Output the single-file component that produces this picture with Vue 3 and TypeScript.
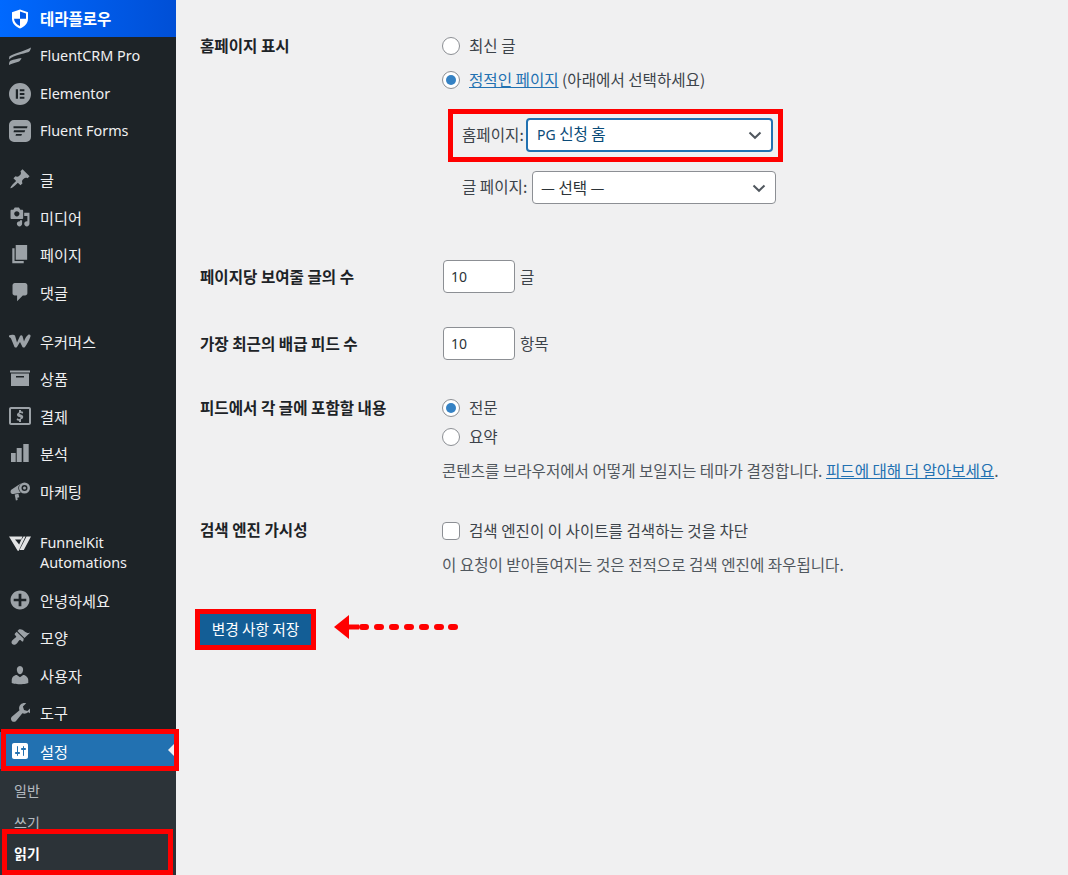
<script setup lang="ts">
interface Item { label: string; icon: string; gap?: boolean; lat?: boolean; two?: boolean; big?: boolean; vb?: string; tone?: string; tight?: boolean }

const items: Item[] = [
  { label: 'FluentCRM Pro', lat: true, big: true, vb: '0 0 22 22', icon: 'M.3 11.500C4 9 14 6.500 22 2.500c-.4 2.600-1.500 4.300-3 4.800-5 1.700-13 2.300-19 7.200zM0 20c0-2.700.5-3.700 2-4.400 2.500-1 6.500-1.700 10.500-2.500-.5 1.800-1.600 3.200-3.100 3.700C6 17.900 3 18.600 0 20z' },
  { label: 'Elementor', lat: true, big: true, vb: '0 0 22 22', icon: 'M11 0a11 11 0 1 0 0 22 11 11 0 0 0 0-22zM6.800 6.300h2.200v9.400H6.800zM10.800 6.300h4.600v2h-4.600zM10.800 10h4.600v2h-4.600zM10.800 13.700h4.600v2h-4.600z' },
  { label: 'Fluent Forms', lat: true, big: true, vb: '0 0 22 22', icon: 'M5 0h12a5 5 0 0 1 5 5v12a5 5 0 0 1-5 5H5a5 5 0 0 1-5-5V5a5 5 0 0 1 5-5zM4.500 6.200v2h13.500l.5-2zM5 10.200l-.5 2h11l.7-2zM7 14l-.5 1.800h5.800l.7-1.800z' },
  { label: '글', gap: true, tight: true, vb: '1 1 18 18', icon: 'M10.440 3.020l1.820-1.820 6.360 6.350-1.830 1.820c-1.050-.68-2.480-.57-3.410.36l-.75.750c-.92.930-1.040 2.350-.35 3.410l-1.830 1.820-2.410-2.410-2.800 2.790c-.42.420-3.380 2.710-3.800 2.290s1.860-3.390 2.280-3.810l2.790-2.790L4.100 9.360l1.830-1.820c1.050.690 2.480.570 3.400-.36l.75-.75c.930-.92 1.050-2.350.36-3.410z' },
  { label: '미디어', vb: '.5 .5 19 19', icon: 'M13 11V4c0-.55-.45-1-1-1h-1.670L9 1H5L3.670 3H2c-.55 0-1 .45-1 1v7c0 .55.45 1 1 1h10c.55 0 1-.45 1-1zM7 4.500c1.380 0 2.500 1.120 2.500 2.500S8.380 9.500 7 9.500 4.500 8.380 4.500 7 5.620 4.500 7 4.500zM14 6h5v10.500c0 1.380-1.120 2.500-2.500 2.500S14 17.880 14 16.500s1.120-2.500 2.500-2.500c.17 0 .34.020.5.050V9h-3V6zm-4 8.050V13h2v3.500c0 1.380-1.120 2.500-2.500 2.500S7 17.880 7 16.500 8.120 14 9.500 14c.17 0 .34.020.5.050z' },
  { label: '페이지', vb: '1 1.200 17.500 17.500', icon: 'M6 15V2h10v13H6zm-1 1h8v2H3V5h2v11z' },
  { label: '댓글', vb: '.8 1.200 17.500 17.500', icon: 'M5 2h9c1.100 0 2 .9 2 2v7c0 1.100-.9 2-2 2h-2l-5 5v-5H5c-1.100 0-2-.9-2-2V4c0-1.100.9-2 2-2z' },
  { label: '우커머스', gap: true, big: true, vb: '0 -4.500 22 22', icon: 'M0 1C2 0 5 0 6 1l2 7 3-6.500c.5-1 2-1 2.500 0L15 7c1-3 2-5 4-6.500 1.500-1 3 0 2.500 1.500C20 6 18 10 16 12.500c-.7.800-2 .8-2.500 0L11 7.500l-3 5c-.5.800-2 .8-2.500 0L2 4c-.5-1-1.500-1-2-1.500z' },
  { label: '상품', big: true, vb: '0 0 22 22', icon: 'M1 3.500h20v2H1zM2 6.500h18V19H2zM7 9v1.500h8V9z' },
  { label: '결제', big: true, vb: '0 0 22 22', icon: 'M2 2h18c1.100 0 2 .9 2 2v14c0 1.100-.9 2-2 2H2c-1.100 0-2-.9-2-2V4c0-1.100.9-2 2-2zM2 4v14h18V4zM10 5h2v1.300c1 .1 1.700.4 2.200.7l-.5 1.700c-.5-.3-1.300-.7-2.200-.7-.8 0-1.100.3-1.100.6 0 .4.500.6 1.500.9 1.500.5 2.300 1.200 2.300 2.400 0 1.100-.8 2-2.200 2.300V17h-2v-1.300c-1-.1-1.900-.4-2.400-.8l.5-1.700c.6.400 1.400.7 2.300.7.800 0 1.300-.3 1.300-.8 0-.4-.4-.7-1.400-1-1.400-.5-2.300-1.100-2.300-2.400 0-1.100.7-1.900 2-2.300z' },
  { label: '분석', icon: 'M1 10h4.700v9H1zM6.700 5h5v14h-5zM13.300 1h5.400v18h-5.400z' },
  { label: '마케팅', icon: 'M14.500 1.500a5.500 5.500 0 1 1 0 11 5.500 5.500 0 0 1 0-11zM14.500 4a3 3 0 1 0 0 6 3 3 0 0 0 0-6zM14.500 5.500a1.500 1.500 0 1 1 0 3 1.500 1.500 0 0 1 0-3zM11 2.300c-1.700 1.600-2.700 3-2.700 4.700 0 1.700 1 3.400 2.500 4.700L3.500 13C2 13.300.8 12.500.6 11.200.4 10 .9 8.800 2 8.200zM4.700 13.500l3.700-.7.9 3.400-2 .5.4 2.300-1.800.5z' },
  { label: 'FunnelKit Automations', lat: true, two: true, gap: true, big: true, vb: '0 -3 22 22', tone: 'light', icon: 'M0 .5h14.500l-1.800 3H6l4.200 5 3.300-8h-1 4L9.800 14.500c-.3.500-1 .5-1.300 0zM17.500.5H22L14.800 14h-4.300z' },
  { label: '안녕하세요', vb: '.5 .5 19 19', icon: 'M10 1c-5 0-9 4-9 9s4 9 9 9 9-4 9-9-4-9-9-9zm1.300 9.300V16H8.700v-4.700H4V8.700h4.700V4h2.600v4.700H16v2.600h-4.700z' },
  { label: '모양', icon: 'M14.480 11.060L7.410 3.990l1.500-1.500c.5-.56 2.300-.47 3.510.32 1.210.8 1.430 1.280 2.910 2.100 1.180.64 2.450 1.260 4.670.88zM13.770 11.770L6.700 4.700 4.930 6.470c-.39.390-.39 1.020 0 1.410l1.060 1.060c.39.390.39 1.030 0 1.420-.6.600-1.430 1.110-2.210 1.690-.35.260-.7.530-1.010.840C1.430 13.710 1.020 15.800 2.200 16.980s3.270.770 4.590-.55c.310-.31.580-.66.840-1.010.58-.78 1.090-1.610 1.690-2.210.390-.39 1.030-.39 1.420 0l1.060 1.060c.39.390 1.020.390 1.410 0z' },
  { label: '사용자', vb: '1.700 1.200 16.600 17.500', icon: 'M10 9.250c-2.270 0-2.730-3.440-2.730-3.440C7 4.020 7.820 2 9.970 2c2.160 0 2.980 2.020 2.710 3.810 0 0-.41 3.440-2.680 3.440zm0 2.570L12.720 10c2.390 0 4.520 2.330 4.520 4.530v2.490s-3.650 1.130-7.240 1.130c-3.650 0-7.240-1.130-7.240-1.130v-2.490c0-2.250 1.940-4.480 4.470-4.480z' },
  { label: '도구', vb: '1.200 1.200 17 17', icon: 'M16.680 9.770c-1.340 1.340-3.300 1.670-4.950.99l-5.410 6.520c-.99.99-2.590.99-3.580 0s-.99-2.590 0-3.570l6.520-5.420c-.68-1.650-.35-3.610.99-4.950 1.280-1.280 3.120-1.620 4.710-1.060l-2.810 2.810.99 2.820 2.830.99 2.810-2.810c.56 1.590.22 3.430-1.100 4.680z' },
]
const settingsIcon = 'M18 16V4c0-1.100-.9-2-2-2H4c-1.100 0-2 .9-2 2v12c0 1.100.9 2 2 2h12c1.100 0 2-.9 2-2zM8 11h1c.55 0 1 .45 1 1s-.45 1-1 1H8v1.500c0 .28-.22.5-.5.5s-.5-.22-.5-.5V13H6c-.55 0-1-.45-1-1s.45-1 1-1h1V5.500c0-.28.22-.5.5-.5s.5.22.5.5V11zm5-2h-1c-.55 0-1-.45-1-1s.45-1 1-1h1V5.500c0-.28.22-.5.5-.5s.5.22.5.5V7h1c.55 0 1 .45 1 1s-.45 1-1 1h-1v5.500c0 .28-.22.5-.5.5s-.5-.22-.5-.5V9z'
const dashes = [25, 40, 55, 70, 85, 100, 114]
</script>

<template>
  <div class="page">
    <aside class="side">
      <div class="brand">
        <svg class="ico" viewBox="0 0 20 20">
          <path fill="#fff" d="M10 .500l8 2.700v6c0 4.800-3.200 8.500-8 10.300-4.800-1.800-8-5.500-8-10.300v-6z"/>
          <path fill="#0058e6" d="M10 3v6.700h6V4.600l-6-2zM10 9.700H4c.2 3.300 2.600 5.800 6 7.300z"/>
        </svg>
        <span>테라플로우</span>
      </div>
      <div v-for="it in items" :key="it.label" class="item" :class="{ gap: it.gap, two: it.two, tight: it.tight }">
        <svg class="ico" :class="[{ big: it.big }, it.tone]" :viewBox="it.vb || '0 0 20 20'"><path fill-rule="evenodd" :d="it.icon"/></svg>
        <span :class="it.lat ? 'lat' : 'ko'">{{ it.label }}</span>
      </div>
      <div class="item active">
        <svg class="ico" viewBox="0 0 20 20"><path :d="settingsIcon"/></svg>
        <span class="ko">설정</span>
        <i class="caret"></i>
        <i class="mark mark-set"></i>
      </div>
      <ul class="sub">
        <li>일반</li>
        <li>쓰기</li>
        <li class="cur">읽기<i class="mark mark-read"></i></li>
      </ul>
    </aside>

    <main class="main">
      <section class="row first">
        <h3 class="th">홈페이지 표시</h3>
        <div class="td">
          <label class="opt"><i class="radio"></i>최신 글</label>
          <label class="opt second"><i class="radio on"></i><span><a class="link">정적인 페이지</a> (아래에서 선택하세요)</span></label>
          <div class="pick pick-home">
            <span class="pick-label">홈페이지:</span>
            <div class="select focus">
              <span class="val"><span class="lat">PG</span> 신청 홈</span>
              <svg viewBox="0 0 16 16"><path d="M2.500 5.500L8 10.800l5.500-5.300" /></svg>
            </div>
            <i class="mark mark-home"></i>
          </div>
          <div class="pick pick-post">
            <span class="pick-label">글 페이지:</span>
            <div class="select wide">
              <span class="val">— 선택 —</span>
              <svg viewBox="0 0 16 16"><path d="M2.500 5.500L8 10.800l5.500-5.300" /></svg>
            </div>
          </div>
        </div>
      </section>

      <section class="row num r2">
        <h3 class="th">페이지당 보여줄 글의 수</h3>
        <div class="td inline"><div class="input lat">10</div><span class="val">글</span></div>
      </section>

      <section class="row num r3">
        <h3 class="th">가장 최근의 배급 피드 수</h3>
        <div class="td inline"><div class="input lat">10</div><span class="val">항목</span></div>
      </section>

      <section class="row r4">
        <h3 class="th">피드에서 각 글에 포함할 내용</h3>
        <div class="td">
          <label class="opt"><i class="radio on"></i>전문</label>
          <label class="opt tight"><i class="radio"></i>요약</label>
          <p class="desc">콘텐츠를 브라우저에서 어떻게 보일지는 테마가 결정합니다. <a class="link">피드에 대해 더 알아보세요</a>.</p>
        </div>
      </section>

      <section class="row r5">
        <h3 class="th up">검색 엔진 가시성</h3>
        <div class="td">
          <label class="opt"><i class="check"></i>검색 엔진이 이 사이트를 검색하는 것을 차단</label>
          <p class="desc d2">이 요청이 받아들여지는 것은 전적으로 검색 엔진에 좌우됩니다.</p>
        </div>
      </section>

      <div class="save">
        <button class="btn" type="button">변경 사항 저장<i class="mark mark-btn"></i></button>
        <svg class="arrow" width="126" height="26" viewBox="0 0 126 26">
          <path d="M0 13L15 1v24z" fill="#f00"/>
          <rect x="15" y="10.500" width="10" height="5" fill="#f00"/>
          <rect v-for="x in dashes" :key="x" :x="x" y="10" width="10" height="6" rx="3" fill="#f00"/>
        </svg>
      </div>
    </main>
  </div>
</template>

<style>
html, body { margin: 0; background: #f0f0f1; }
</style>

<style scoped>
.page {
  display: flex;
  height: 875px;
  overflow: hidden;
  background: #f0f0f1;
  color: #3c434a;
  font-family: "Noto Sans CJK KR", "Noto Sans", sans-serif;
  font-size: 15.600px;
  line-height: 20px;
}
.lat { font-family: "Noto Sans", "Noto Sans CJK KR", sans-serif; font-size: 14px; }
.side {
  width: 176px;
  flex: none;
  background: #1d2327;
  color: #f0f0f1;
  font-size: 15.200px;
}
.side .lat { font-size: 14.400px; }
.brand {
  height: 37px;
  display: flex;
  align-items: center;
  padding-left: 10px;
  gap: 10px;
  background: linear-gradient(90deg, #0069ff, #004fd6);
  color: #fff;
  font-weight: 700;
  font-size: 15.500px;
}
.brand span { margin-bottom: 2px; }
.ico { width: 20px; height: 20px; flex: none; fill: #9ca2a7; }
.ico.big { width: 22px; height: 22px; margin: 0 -1px; }
.ico.light { fill: #e2e3e4; }
.item {
  position: relative;
  height: 37.500px;
  box-sizing: border-box;
  padding: .5px 0 0 10px;
  display: flex;
  align-items: center;
  gap: 10px;
}
.item.gap { margin-top: 11.500px; }
.item.gap.tight { margin-top: 10.600px; }
.item.two { height: 59.500px; align-items: flex-start; padding-top: 12px; margin-top: 12px; }
.item.two span { width: 110px; }
.item.active { background: #2271b1; color: #fff; margin-top: 1px; }
.item.active .ico { fill: #fff; }
.caret {
  position: absolute;
  right: 0;
  top: 50%;
  margin-top: -8px;
  border: 8px solid transparent;
  border-right-color: #f0f0f1;
  border-left-width: 0;
}
.mark { position: absolute; border: 5px solid #f00; box-sizing: border-box; pointer-events: none; }
.mark-set { left: 1px; right: -3px; top: -3px; bottom: -2px; }
.sub {
  list-style: none;
  margin: 0;
  padding: 6px 0 0;
  background: #2c3338;
  color: rgba(240, 246, 252, .7);
  font-size: 14px;
  height: 110px;
}
.sub li { position: relative; height: 31.500px; line-height: 31px; padding-left: 14px; }
.sub .cur { color: #fff; font-weight: 700; }
.mark-read { left: 2px; right: 3px; top: -9px; bottom: -5px; }

.main { flex: 1; padding: 36px 0 0 24px; min-width: 0; }
.row { display: flex; }
.th { width: 242px; flex: none; margin: 0; font-size: 15.600px; font-weight: 700; color: #1d2327; line-height: 18px; }
.num .th { margin-bottom: 2px; }
.th.up { margin-top: -1px; }
.td { flex: 1; min-width: 0; }
.opt { display: flex; align-items: center; gap: 9px; height: 20px; box-sizing: border-box; padding-bottom: 2px; }
.opt.second { margin-top: 14px; }
.opt.tight { margin-top: 9px; }
.radio, .check {
  width: 18px; height: 18px; flex: none; box-sizing: border-box;
  border: 1px solid #8c8f94; background: #fff; border-radius: 50%;
  position: relative;
  margin-top: 2px;
}
.check { border-radius: 4px; }
.radio.on::after {
  content: ""; position: absolute; inset: 3px; border-radius: 50%; background: #3582c4;
}
.link { color: #2271b1; text-decoration: underline; }
.val { margin-bottom: 2px; }
.pick { position: relative; display: flex; align-items: center; padding-left: 20px; gap: 4px; }
.pick-home { margin-top: 28px; height: 34px; }
.pick-post { margin-top: 19px; height: 33px; }
.pick-home .pick-label { width: 60px; }
.pick-post .pick-label { width: 66px; }
.pick-label { white-space: nowrap; flex: none; margin-bottom: 3px; }
.select {
  width: 247px;
  height: 34px;
  flex: none;
  box-sizing: border-box;
  display: flex;
  align-items: center;
  justify-content: space-between;
  padding: 0 8px 0 9px;
  border: 1px solid #8c8f94;
  border-radius: 4px;
  background: #fff;
}
.select.wide { width: 244px; height: 33px; color: #2c3338; padding-left: 8px; }
.select.focus { border: 2px solid #2271b1; color: #0a4b78; }
.select svg { width: 16px; height: 16px; fill: none; stroke: #50575e; stroke-width: 2; }
.mark-home { left: 6px; top: -9px; width: 335px; height: 53px; }
.r2 { margin-top: 56px; }
.r3 { margin-top: 34px; }
.num { align-items: center; height: 33px; }
.inline { display: flex; align-items: center; gap: 5px; padding-left: 1px; }
.input {
  width: 72px; height: 33px; box-sizing: border-box;
  border: 1px solid #8c8f94; border-radius: 4px; background: #fff;
  display: flex; align-items: center; padding-left: 7px; color: #2c3338;
}
.r4 { margin-top: 38px; }
.desc { margin: 14px 0 0; white-space: nowrap; color: #50575e; line-height: 18px; }
.r5 { margin-top: 42px; }
.save { display: flex; align-items: flex-start; gap: 23px; margin-top: 41px; }
.btn {
  position: relative;
  width: 111px;
  height: 31px;
  padding: 0 0 2px;
  border: 0;
  background: #135e96;
  color: #fff;
  font: inherit;
  font-size: 14.700px;
}
.mark-btn { left: -5px; top: -5px; right: -5px; bottom: -5px; }
</style>
